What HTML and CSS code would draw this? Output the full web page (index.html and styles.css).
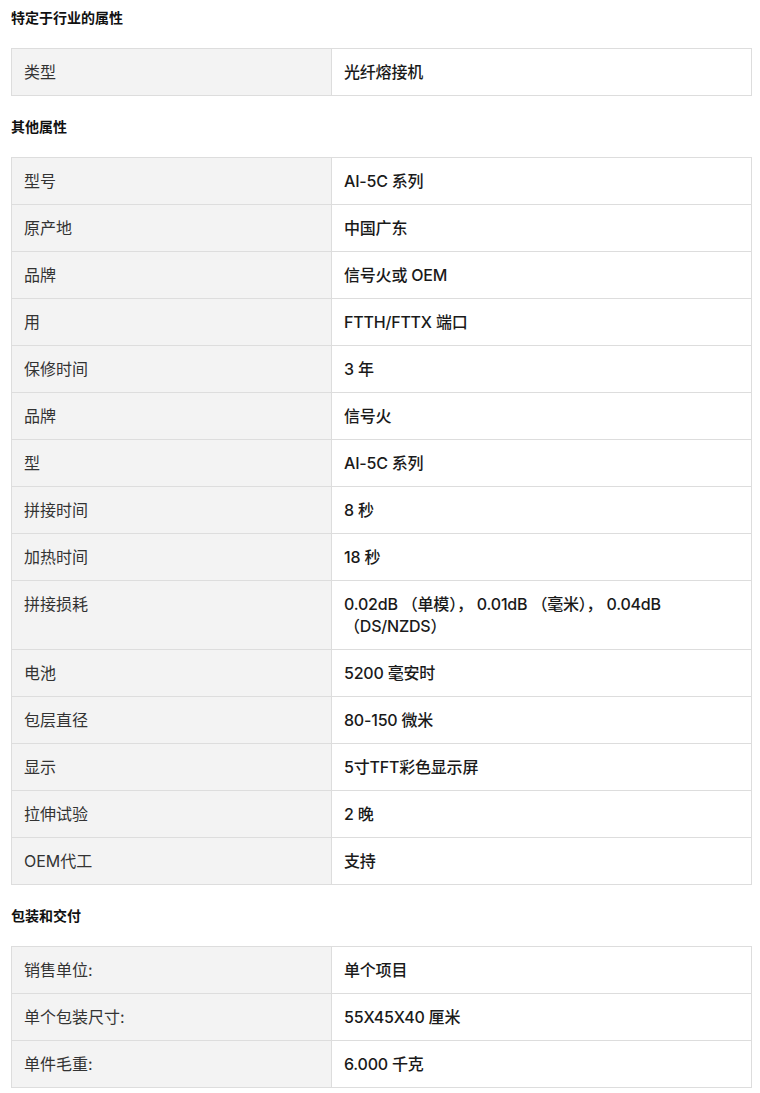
FILE: index.html
```html
<!DOCTYPE html>
<html lang="zh-CN">
<head>
<meta charset="utf-8">
<title>属性</title>
<link rel="stylesheet" href="styles.css">
</head>
<body>
<section class="group">
  <h3 class="group-title">特定于行业的属性</h3>
  <div class="attr-table">
    <div class="attr-label">类型</div><div class="attr-value">光纤熔接机</div>
  </div>
</section>
<section class="group">
  <h3 class="group-title">其他属性</h3>
  <div class="attr-table">
    <div class="attr-label">型号</div><div class="attr-value">AI-5C 系列</div>
    <div class="attr-label">原产地</div><div class="attr-value">中国广东</div>
    <div class="attr-label">品牌</div><div class="attr-value">信号火或 OEM</div>
    <div class="attr-label">用</div><div class="attr-value">FTTH/FTTX 端口</div>
    <div class="attr-label">保修时间</div><div class="attr-value">3 年</div>
    <div class="attr-label">品牌</div><div class="attr-value">信号火</div>
    <div class="attr-label">型</div><div class="attr-value">AI-5C 系列</div>
    <div class="attr-label">拼接时间</div><div class="attr-value">8 秒</div>
    <div class="attr-label">加热时间</div><div class="attr-value">18 秒</div>
    <div class="attr-label">拼接损耗</div><div class="attr-value">0.02dB （单模）， 0.01dB （毫米）， 0.04dB （DS/NZDS）</div>
    <div class="attr-label">电池</div><div class="attr-value">5200 毫安时</div>
    <div class="attr-label">包层直径</div><div class="attr-value">80-150 微米</div>
    <div class="attr-label">显示</div><div class="attr-value">5寸TFT彩色显示屏</div>
    <div class="attr-label">拉伸试验</div><div class="attr-value">2 晚</div>
    <div class="attr-label">OEM代工</div><div class="attr-value">支持</div>
  </div>
</section>
<section class="group">
  <h3 class="group-title">包装和交付</h3>
  <div class="attr-table">
    <div class="attr-label">销售单位:</div><div class="attr-value">单个项目</div>
    <div class="attr-label">单个包装尺寸:</div><div class="attr-value">55X45X40 厘米</div>
    <div class="attr-label">单件毛重:</div><div class="attr-value">6.000 千克</div>
  </div>
</section>
</body>
</html>
```

FILE: styles.css
```css
html, body {
  background: #ffffff;
}
body {
  margin: 8px 8px 8px 11px;
  font-family: Inter, "Noto Sans CJK SC", sans-serif;
  color: #222222;
}
.group-title {
  margin: 0 0 20px 0;
  font-size: 14px;
  line-height: 20px;
  font-weight: 700;
  color: #111111;
}
.group + .group .group-title {
  margin-top: 21px;
}
.attr-table {
  display: grid;
  grid-template-columns: 320px 1fr;
  border-top: 1px solid #dddddd;
  border-left: 1px solid #dddddd;
}
.attr-label,
.attr-value {
  padding: 12px;
  font-size: 16px;
  line-height: 22px;
  border-right: 1px solid #dddddd;
  border-bottom: 1px solid #dddddd;
}
.attr-label {
  background: #f3f3f3;
  color: #333333;
  font-weight: 400;
}
.attr-value {
  background: #ffffff;
  color: #1a1a1a;
  font-weight: 500;
  letter-spacing: -0.2px;
}
```
